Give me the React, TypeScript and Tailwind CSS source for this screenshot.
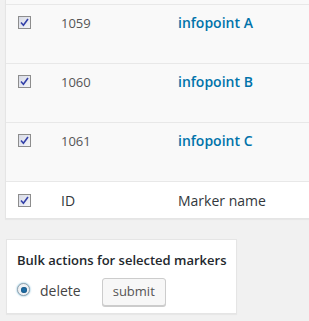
import React from 'react';

const rows = [
  { id: 1059, name: 'infopoint A' },
  { id: 1060, name: 'infopoint B' },
  { id: 1061, name: 'infopoint C' },
];

function Check() {
  return (
    <span className="flex h-[13px] w-[13px] items-center justify-center border border-[#8d8d8d] bg-gradient-to-br from-[#d8dbe6] to-[#f3f4f8]">
      <svg width="9" height="9" viewBox="0 0 9 9">
        <path d="M1 4.5 L3.4 7.2 L8 1" fill="none" stroke="#3340a8" strokeWidth="1.6" />
      </svg>
    </span>
  );
}

export default function App() {
  return (
    <div className="h-[321px] w-[309px] overflow-hidden bg-[#f1f1f1] text-[13px] text-[#444]" style={{ fontFamily: '"Open Sans", sans-serif' }}>
      {/* marker table */}
      <div className="ml-[5px] border-b border-l border-[#e5e5e5] shadow-[0_1px_1px_rgba(0,0,0,0.04)]">
        <div className="h-[5px] border-b border-[#e8e8e8] bg-[#f9f9f9]" />
        {rows.map((r) => (
          <div key={r.id} className="flex h-[59px] items-start border-b border-[#e8e8e8] bg-[#f9f9f9]">
            <div className="w-[48px] shrink-0 pl-[12px] pt-[11px]">
              <Check />
            </div>
            <div className="w-[124px] shrink-0 pl-[7px] pt-[8px] text-[13px] leading-5 text-[#555]">{r.id}</div>
            <div className="pt-[8px] text-[14px] font-semibold leading-5 text-[#0073aa]">{r.name}</div>
          </div>
        ))}
        <div className="flex h-[36px] items-center bg-white">
          <div className="w-[48px] shrink-0 pl-[12px]">
            <Check />
          </div>
          <div className="w-[124px] shrink-0 pl-[7px] text-[14px] text-[#32373c]">ID</div>
          <div className="text-[14px] text-[#32373c]">Marker name</div>
        </div>
      </div>

      {/* bulk actions */}
      <div className="ml-[6px] mt-[20px] inline-block border border-[#e5e5e5] bg-white pb-[7px] pl-[10px] pr-[9px] pt-[10px] shadow-[0_1px_1px_rgba(0,0,0,0.04)]">
        <div className="whitespace-nowrap font-semibold leading-5 text-[#23282d]">Bulk actions for selected markers</div>
        <div className="mt-[8px] flex items-center">
          <span className="-mt-[5px] flex h-[13px] w-[13px] items-center justify-center rounded-full border border-[#9aa4ad] bg-[#eef1f4] shadow-[0_0_2px_rgba(30,140,190,0.8)]">
            <span className="h-[6px] w-[6px] rounded-full bg-[#1e6fa8] shadow-[inset_0_0_2px_#0a3a60]" />
          </span>
          <span className="ml-[10px] -mt-[4px] text-[14px] text-[#444]">delete</span>
          <button className="ml-[21px] h-[28px] rounded-[3px] border border-[#cccccc] bg-[#f7f7f7] px-[10px] text-[13px] text-[#555] shadow-[0_1px_0_#ccc]">
            submit
          </button>
        </div>
      </div>
    </div>
  );
}
